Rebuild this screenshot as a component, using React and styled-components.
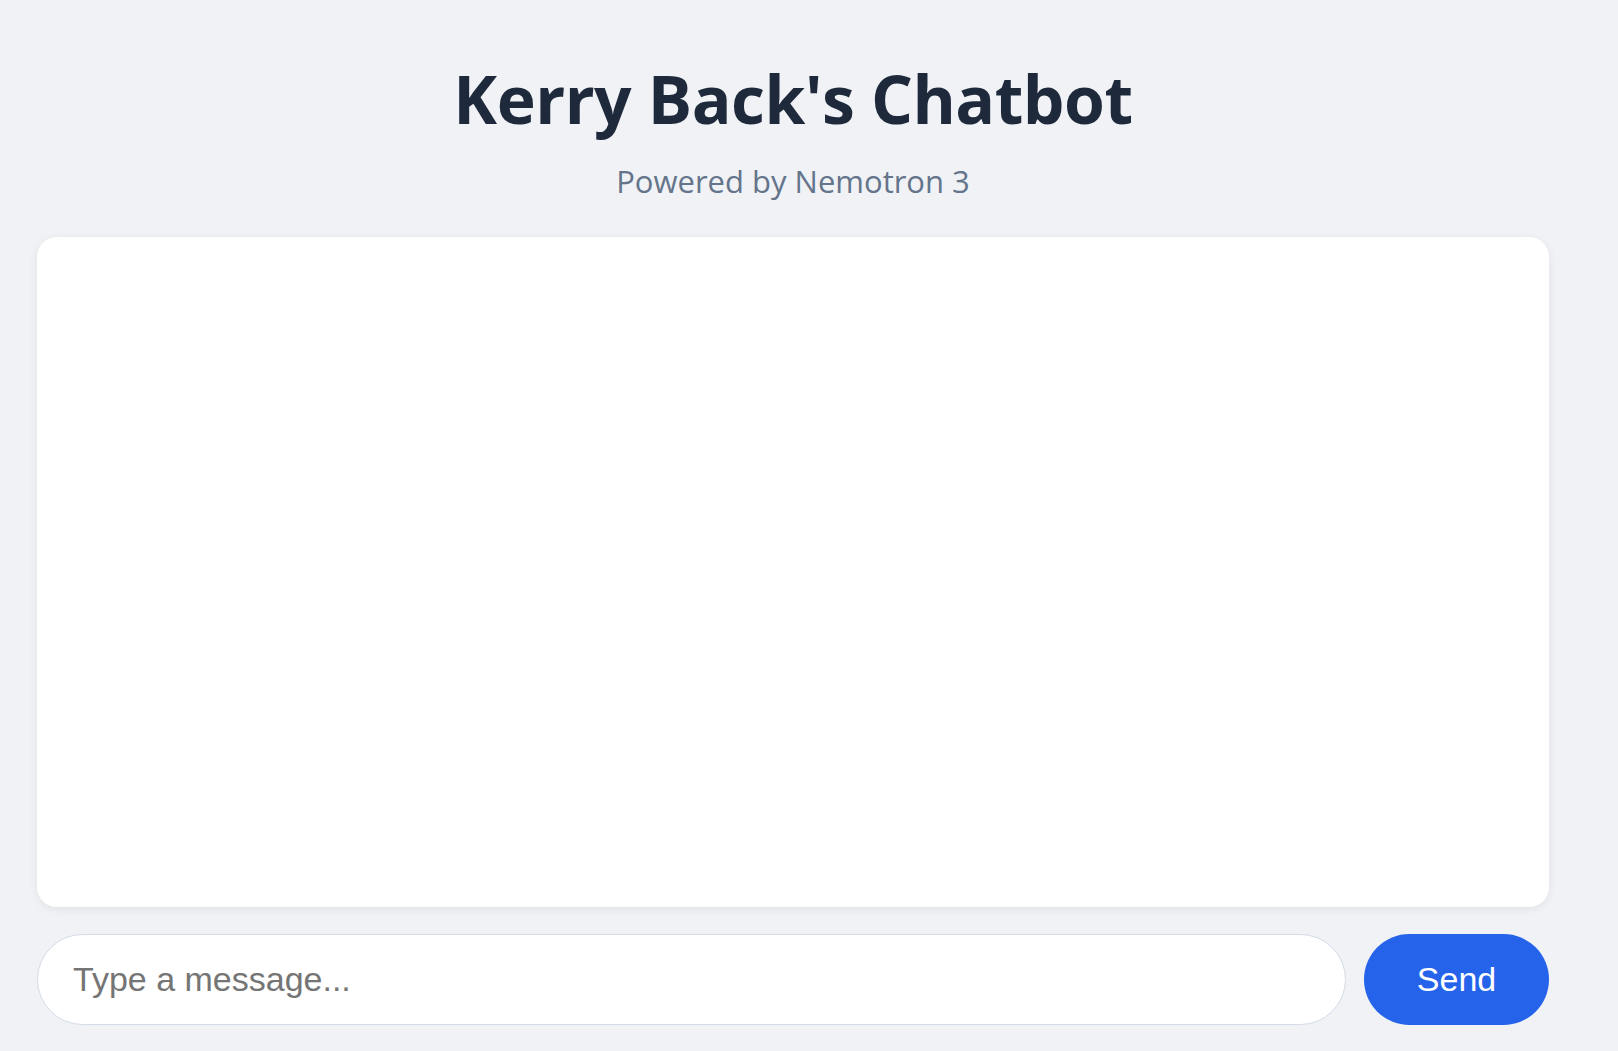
import React, { useState } from "react";
import styled, { createGlobalStyle } from "styled-components";

const GlobalStyle = createGlobalStyle`
  html, body {
    margin: 0;
    padding: 0;
    background: #f0f2f5;
  }
  * { box-sizing: border-box; }
`;

const Page = styled.div`
  width: 1512px;
  margin-left: 37px;
  height: 1051px;
  display: flex;
  flex-direction: column;
  padding: 0 0 26px;
`;

const Header = styled.header`
  display: flex;
  flex-direction: column;
  align-items: center;
  padding-top: 59px;
  margin-bottom: 37px;
`;

const Title = styled.h1`
  margin: 0;
  font-family: "Open Sans", "Noto Sans", sans-serif;
  font-weight: 700;
  font-size: 66px;
  line-height: 1.2;
  color: #1e293b;
  letter-spacing: -0.5px;
`;

const Subtitle = styled.p`
  margin: 25px 0 0;
  font-family: "Open Sans", "Noto Sans", sans-serif;
  font-size: 31px;
  line-height: 1.2;
  color: #64748b;
`;

const Messages = styled.main`
  flex: 1;
  background: #ffffff;
  border-radius: 20px;
  box-shadow: 0 2px 10px rgba(15, 23, 42, 0.07);
  overflow-y: auto;
`;

const InputRow = styled.form`
  display: flex;
  gap: 18px;
  margin-top: 27px;
`;

const MessageInput = styled.input`
  flex: 1;
  height: 91px;
  border: 1px solid #d3dbe6;
  border-radius: 9999px;
  padding: 0 35px;
  font-family: "Liberation Sans", Arial, sans-serif;
  font-size: 34px;
  color: #1e293b;
  background: #ffffff;
  outline: none;

  &::placeholder {
    color: #757575;
  }
`;

const SendButton = styled.button`
  width: 185px;
  height: 91px;
  border: none;
  border-radius: 9999px;
  background: #2563eb;
  color: #ffffff;
  font-family: "Liberation Sans", Arial, sans-serif;
  font-size: 34px;
  cursor: pointer;
`;

export default function App() {
  const [text, setText] = useState("");

  return (
    <>
      <GlobalStyle />
      <Page>
        <Header>
          <Title>Kerry Back's Chatbot</Title>
          <Subtitle>Powered by Nemotron 3</Subtitle>
        </Header>
        <Messages />
        <InputRow onSubmit={(e) => { e.preventDefault(); setText(""); }}>
          <MessageInput
            placeholder="Type a message..."
            value={text}
            onChange={(e) => setText(e.target.value)}
          />
          <SendButton type="submit">Send</SendButton>
        </InputRow>
      </Page>
    </>
  );
}
